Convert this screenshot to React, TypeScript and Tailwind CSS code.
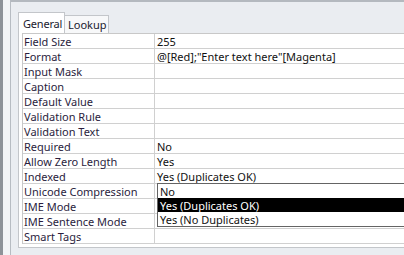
import React from "react";

const rows: [string, string][] = [
  ["Field Size", "255"],
  ["Format", '@[Red];"Enter text here"[Magenta]'],
  ["Input Mask", ""],
  ["Caption", ""],
  ["Default Value", ""],
  ["Validation Rule", ""],
  ["Validation Text", ""],
  ["Required", "No"],
  ["Allow Zero Length", "Yes"],
  ["Indexed", "Yes (Duplicates OK)"],
  ["Unicode Compression", ""],
  ["IME Mode", ""],
  ["IME Sentence Mode", ""],
  ["Smart Tags", ""],
];

export default function App() {
  return (
    <div
      className="relative w-[404px] h-[255px] overflow-hidden flex bg-[#e9edf1] text-[11px] leading-[14px]"
      style={{ fontFamily: '"Noto Sans", "Open Sans", sans-serif' }}
    >
      <div className="w-[3px] shrink-0 bg-[#8e9399]" />
      <div className="w-[8px] shrink-0 bg-[#f3f5f7] border-r border-[#b7bcc2]" />
      <div className="flex-1 flex flex-col border-t-2 border-[#b4b9bf] bg-[#eaedf1]">
        <div className="pl-[7px] pt-[10px] flex flex-col">
          <div className="flex items-end h-[21px]">
            <div className="w-[47px] h-[21px] bg-white border border-b-0 border-[#c3c6ca] pl-[4px] pt-[4px] text-[11px] tracking-[-0.2px] text-[#1a1a2e] relative z-10">
              General
            </div>
            <div className="w-[44px] h-[18px] bg-[#f7f8f9] border border-l-0 border-b-0 border-[#c3c6ca] pl-[3px] pt-[2px] text-[11px] text-[#1a1a2e]">
              Lookup
            </div>
          </div>
          <div className="bg-white border-l border-b border-[#c3c6ca] pl-[3px] pb-[3px]">
            <div className="border-t border-l border-[#c8c8c8]">
              {rows.map(([label, value]) => (
                <div key={label} className="flex h-[15px] border-b border-[#d0d0d0] leading-[13px]">
                  <div className="w-[132px] shrink-0 border-r border-[#d0d0d0] pl-[1px] pt-[1px] text-[#2a1d3d] whitespace-nowrap">
                    {label}
                  </div>
                  <div className="flex-1 pl-[2px] pt-[1px] text-[#111] whitespace-nowrap">{value}</div>
                </div>
              ))}
            </div>
          </div>
        </div>
      </div>
      <div className="absolute left-[157px] top-[183px] w-[260px] h-[44px] bg-white border border-[#646464] text-[#111] leading-[13px]">
        <div className="h-[14px] pl-[2px] pt-[1px]">No</div>
        <div className="h-[14px] pl-[2px] pt-[1px] bg-black text-white">Yes (Duplicates OK)</div>
        <div className="h-[14px] pl-[2px] pt-[1px]">Yes (No Duplicates)</div>
      </div>
    </div>
  );
}
